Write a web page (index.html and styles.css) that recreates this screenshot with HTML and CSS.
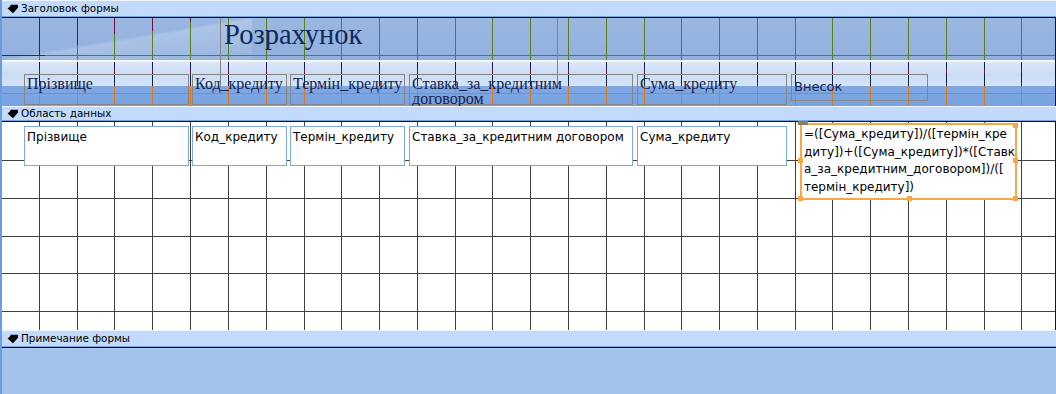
FILE: index.html
```html
<!DOCTYPE html>
<html lang="uk">
<head>
<meta charset="utf-8">
<title>Розрахунок</title>
<link rel="stylesheet" href="styles.css">
</head>
<body>
<div class="form">
  <div class="bar bar-1">
    <svg class="arrow" viewBox="0 0 11 9" width="12" height="10"><path d="M3.5 0.5H10V3H10.5L5.5 8.5L0.5 4L2.5 2.5Z"/></svg>
    <span>Заголовок формы</span>
  </div>
  <div class="header">
    <div class="band band-a"></div>
    <div class="band band-b"></div>
    <div class="band band-c"></div>
    <div class="title-box">Розрахунок</div>
    <div class="lbl l-1">Прізвище</div>
    <div class="lbl l-2">Код_кредиту</div>
    <div class="lbl l-3">Термін_кредиту</div>
    <div class="lbl l-4">Ставка_за_кредитним<br>договором</div>
    <div class="lbl l-5">Сума_кредиту</div>
    <div class="lbl lbl-sans l-6">Внесок</div>
  </div>
  <div class="bar bar-2">
    <svg class="arrow" viewBox="0 0 11 9" width="12" height="10"><path d="M3.5 0.5H10V3H10.5L5.5 8.5L0.5 4L2.5 2.5Z"/></svg>
    <span>Область данных</span>
  </div>
  <div class="data">
    <div class="tb l-1">Прізвище</div>
    <div class="tb l-2">Код_кредиту</div>
    <div class="tb l-3">Термін_кредиту</div>
    <div class="tb l-4">Ставка_за_кредитним договором</div>
    <div class="tb l-5">Сума_кредиту</div>
    <div class="formula">
      <div class="formula-text">=([Сума_кредиту])/([термін_кре<br>диту])+([Сума_кредиту])*([Ставк<br>а_за_кредитним_договором])/([<br>термін_кредиту])</div>
      <span class="h h-tl"></span>
      <span class="h h-tr"></span>
      <span class="h h-ml"></span>
      <span class="h h-mr"></span>
      <span class="h h-bl"></span>
      <span class="h h-bm"></span>
      <span class="h h-br"></span>
    </div>
  </div>
  <div class="bar bar-3">
    <svg class="arrow" viewBox="0 0 11 9" width="12" height="10"><path d="M3.5 0.5H10V3H10.5L5.5 8.5L0.5 4L2.5 2.5Z"/></svg>
    <span>Примечание формы</span>
  </div>
  <div class="footer"></div>
</div>
</body>
</html>
```
FILE: styles.css
```css
* { box-sizing: border-box; margin: 0; padding: 0; }
html, body { width: 1056px; height: 394px; overflow: hidden; }
body { background: #a3c3ea; font-family: "DejaVu Sans", "Noto Sans", sans-serif; }

.form {
  height: 394px;
  border-left: 2px solid #6b9be0;
  display: flex;
  flex-direction: column;
}

/* section bars */
.bar {
  flex: none;
  display: flex;
  align-items: center;
  gap: 2px;
  padding-left: 5px;
  background: #c2dbfc;
  border-top: 1px solid #eef5fe;
  border-bottom: 1px solid #7ca2da;
  font-size: 10.4px;
  line-height: 1;
  color: #000;
}
.bar-1 { height: 17px; }
.bar-2 { height: 15px; }
.bar-3 { height: 17px; }
.arrow { flex: none; fill: #000; }

/* form header */
.header {
  flex: none;
  height: 89px;
  border-top: 1px solid #151515;
  border-right: 1px solid #151515;
  position: relative;
  display: flex;
  flex-direction: column;
  overflow: hidden;
}
.band { flex: none; }
.band-a {
  height: 42px;
  background:
    url("data:image/svg+xml;utf8,<svg xmlns='http://www.w3.org/2000/svg' width='1056' height='42'><path d='M39.5 0V42M77.5 0V42M114.5 0V42M152.5 0V42M190.5 0V42M228.5 0V42M266.5 0V42M304.5 0V42M341.5 0V42M379.5 0V42M417.5 0V42M455.5 0V42M492.5 0V42M530.5 0V42M568.5 0V42M606.5 0V42M644.5 0V42M681.5 0V42M719.5 0V42M757.5 0V42M795.5 0V42M832.5 0V42M870.5 0V42M908.5 0V42M946.5 0V42M984.5 0V42M1021.5 0V42M45 37.5H1056' stroke='%235b7d1d' fill='none'/><path d='M39.5 0V37M77.5 0V27M114.5 0V16M152.5 0V13M190.5 0V4M0 37.5H45' stroke='%236e1038' fill='none'/></svg>") -2px 0 no-repeat,
    linear-gradient(to bottom right, transparent 48%, rgba(255,255,255,.2) 52%, rgba(255,255,255,.06) 100%) 0 0 / 250px 42px no-repeat,
    linear-gradient(#9ab7e1, #91b0dd);
}
.band-b {
  height: 26px;
  background:
    url("data:image/svg+xml;utf8,<svg xmlns='http://www.w3.org/2000/svg' width='1056' height='26'><path d='M39.5 2V26M77.5 2V26M114.5 2V26M152.5 2V26M190.5 2V26M228.5 2V26M266.5 2V26M304.5 2V26M341.5 2V26M379.5 2V26M417.5 2V26M455.5 2V26M492.5 2V26M530.5 2V26M568.5 2V26M606.5 2V26M644.5 2V26M681.5 2V26M719.5 2V26M757.5 2V26M795.5 2V26M832.5 2V26M870.5 2V26M908.5 2V26M946.5 2V26M984.5 2V26M1021.5 2V26' stroke='%2316204a' fill='none'/><path d='M39.5 9V13M77.5 9V13M114.5 9V13M152.5 9V13M190.5 9V13M228.5 9V13M266.5 9V13M304.5 9V13M341.5 9V13M379.5 9V13M417.5 9V13M455.5 9V13M492.5 9V13M530.5 9V13M568.5 9V13M606.5 9V13M644.5 9V13M681.5 9V13M719.5 9V13M757.5 9V13M795.5 9V13M832.5 9V13M870.5 9V13M908.5 9V13M946.5 9V13M984.5 9V13M1021.5 9V13' stroke='%236e1038' fill='none'/></svg>") -2px 0 no-repeat,
    linear-gradient(#f4f8fe 0 2px, #dbe7f8 2px, #cadcf4 55%, #d6e4f7 100%);
}
.band-c {
  height: 20px;
  background:
    url("data:image/svg+xml;utf8,<svg xmlns='http://www.w3.org/2000/svg' width='1056' height='20'><path d='M39.5 0V20M77.5 0V20M114.5 0V20M152.5 0V20M190.5 0V20M228.5 0V20M266.5 0V20M304.5 0V20M341.5 0V20M379.5 0V20M417.5 0V20M455.5 0V20M492.5 0V20M530.5 0V20M568.5 0V20M606.5 0V20M644.5 0V20M681.5 0V20M719.5 0V20M757.5 0V20M795.5 0V20M832.5 0V20M870.5 0V20M908.5 0V20M946.5 0V20M984.5 0V20M1021.5 0V20M0 7.5H1056' stroke='%23e2781c' fill='none'/></svg>") -2px 0 no-repeat,
    linear-gradient(#7fa8e3, #78a3df);
}

.title-box {
  position: absolute;
  left: 218px;
  top: -1px;
  width: 338px;
  height: 71px;
  border: 1px solid #858585;
  border-bottom: none;
  padding: 2px 0 0 3px;
  font-family: "Liberation Serif", "DejaVu Serif", serif;
  font-size: 28.5px;
  line-height: 30px;
  color: #12285a;
}

.lbl {
  position: absolute;
  top: 56px;
  height: 31px;
  border: 1px solid #858585;
  padding: 1px 2px;
  font-family: "Liberation Serif", "DejaVu Serif", serif;
  font-size: 16px;
  line-height: 15px;
  color: #14224c;
  white-space: nowrap;
}
.lbl-sans {
  height: 27px;
  padding-top: 4px;
  font-family: "DejaVu Sans", sans-serif;
  font-size: 13px;
  line-height: 15px;
}

.l-1 { left: 22px; width: 165px; }
.l-2 { left: 190px; width: 95px; }
.l-3 { left: 288px; width: 115px; }
.l-4 { left: 407px; width: 224px; }
.l-5 { left: 635px; width: 150px; }
.l-6 { left: 789px; width: 137px; }

/* detail area */
.data {
  flex: none;
  position: relative;
  height: 209px;
  border-top: 1px solid #111;
  border-right: 1px solid #151515;
  background:
    url("data:image/svg+xml;utf8,<svg xmlns='http://www.w3.org/2000/svg' width='1056' height='208'><path d='M39.5 0V208M77.5 0V208M114.5 0V208M152.5 0V208M190.5 0V208M228.5 0V208M266.5 0V208M304.5 0V208M341.5 0V208M379.5 0V208M417.5 0V208M455.5 0V208M492.5 0V208M530.5 0V208M568.5 0V208M606.5 0V208M644.5 0V208M681.5 0V208M719.5 0V208M757.5 0V208M795.5 0V208M832.5 0V208M870.5 0V208M908.5 0V208M946.5 0V208M984.5 0V208M1021.5 0V208M0 38.5H1056M0 76.5H1056M0 114.5H1056M0 151.5H1056M0 189.5H1056' stroke='%23404040' fill='none'/></svg>") -2px 0 no-repeat,
    #fff;
}
.tb {
  position: absolute;
  top: 4px;
  height: 40px;
  background: #fff;
  border: 1px solid #7ea7df;
  padding: 3px 2px 0;
  font-size: 12px;
  line-height: 14px;
  color: #000;
  white-space: nowrap;
}

.formula {
  position: absolute;
  left: 798px;
  top: 1px;
  width: 217px;
  height: 77px;
  background: #fff;
  border: 2px solid #f7a844;
}
.formula-text {
  padding: 1px 0 0 2px;
  font-size: 12px;
  line-height: 17.5px;
  color: #000;
  white-space: nowrap;
}
.h {
  position: absolute;
  width: 5px;
  height: 5px;
  background: #f7a844;
}
.h-tl { left: -4px; top: -4px; width: 10px; height: 4px; background: #8c7e62; }
.h-tr { right: -3px; top: -2px; }
.h-ml { left: -4px; top: 33px; }
.h-mr { right: -3px; top: 33px; }
.h-bl { left: -4px; bottom: -3px; }
.h-bm { left: 105px; bottom: -3px; }
.h-br { right: -3px; bottom: -3px; }

.footer {
  flex: 1;
  border-top: 1px solid #101010;
  background: #a3c3ea;
}
```
